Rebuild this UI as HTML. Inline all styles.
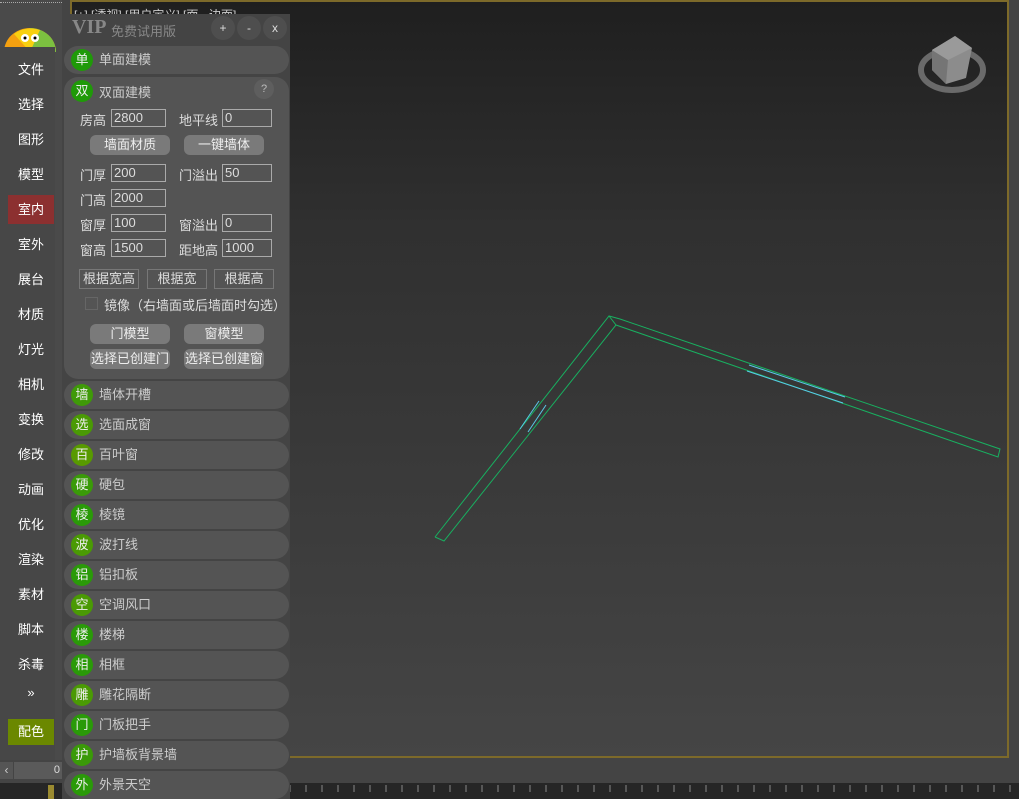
<!DOCTYPE html>
<html><head><meta charset="utf-8"><style>
*{margin:0;padding:0;box-sizing:border-box}
body{width:1019px;height:799px;overflow:hidden;background:#444;position:relative;font-family:"Liberation Sans","Noto Sans CJK SC",sans-serif;font-size:12px;color:#ddd}
.abs{position:absolute}
#vp{left:70px;top:0;width:939px;height:758px;border:2px solid #7d6a2a;background:linear-gradient(#1f1f1f 0%,#303030 30%,#3c3c3c 70%,#454545 100%)}
#side{left:0;top:0;width:62px;height:760px;background:#4a4a4a}
.mi{position:absolute;left:8px;width:46px;height:29px;line-height:29px;text-align:center;color:#fff;font-size:13px}
#panel{left:62px;top:14px;width:228px;height:785px;background:#444}
.pill{position:absolute;left:2px;width:225px;height:28px;border-radius:14px;background:#545454;color:#ccc;font-size:13px}
.pill .c{position:absolute;left:7px;top:3px;width:22px;height:22px;border-radius:11px;background:#2f9a08;color:#eee;text-align:center;line-height:22px;font-size:13px}
.pill .t{position:absolute;left:35px;top:0;line-height:28px}
.lb{position:absolute;color:#ddd;font-size:13px}
.in{position:absolute;width:55px;height:18px;border:1px solid #aaa;color:#ddd;font-size:13px;padding-left:2px;line-height:16px}
.bt{position:absolute;height:20px;border-radius:6px;background:#7a7a7a;color:#eee;text-align:center;line-height:20px;font-size:13px}
.ob{position:absolute;height:20px;border:1px solid #777;color:#ddd;text-align:center;line-height:18px;font-size:13px}
</style></head><body>
<div class="abs" style="left:0;top:0;width:62px;border-bottom:1px dotted #aaa;height:5px"></div>
<div id="vp" class="abs">
<div class="abs" style="left:2px;top:4px;color:#ccc;font-size:12px">[+] [透视] [用户定义] [面 - 边面]</div>
</div>
<svg class="abs" style="left:0;top:0" width="1019" height="799">
<g fill="none" stroke="#18b060" stroke-width="1">
<polyline points="435,537 609,316 620,319 1000,449 998,457 616,325 444,541 435,537"/>
<line x1="609" y1="316" x2="616" y2="325"/>
</g>
<g stroke="#5ac8e8" stroke-width="1"><line x1="539" y1="401" x2="520" y2="429"/><line x1="546" y1="405" x2="528" y2="432"/><line x1="749" y1="365" x2="845" y2="397"/><line x1="747" y1="371" x2="843" y2="403"/></g>
<ellipse cx="952" cy="70" rx="31" ry="20" fill="none" stroke="#6a6a6a" stroke-width="6"/>
<polygon points="932,50 955,36 972,48 966,78 946,84 932,70" fill="#8c8c8c"/>
<polygon points="932,50 948,60 946,84 932,70" fill="#757575"/>
<polygon points="932,50 955,36 972,48 948,60" fill="#9a9a9a"/>
<rect x="0" y="783" width="1019" height="16" fill="#262626"/>
<g stroke="#888">
<path d="M290 785v7M306 785v7M322 785v7M338 785v7M354 785v7M370 785v7M386 785v7M402 785v7M418 785v7M434 785v7M450 785v7M466 785v7M482 785v7M498 785v7M514 785v7M530 785v7M546 785v7M562 785v7M578 785v7M594 785v7M610 785v7M626 785v7M642 785v7M658 785v7M674 785v7M690 785v7M706 785v7M722 785v7M738 785v7M754 785v7M770 785v7M786 785v7M802 785v7M818 785v7M834 785v7M850 785v7M866 785v7M882 785v7M898 785v7M914 785v7M930 785v7M946 785v7M962 785v7M978 785v7M994 785v7M1010 785v7"/></g>
</svg>
<div id="side" class="abs">
<div class="abs" style="left:0;top:2px;width:62px;border-top:1px dotted #aaa"></div>
<svg class="abs" style="left:4px;top:28px" width="52" height="24"><path d="M0 24A26 24 0 0 1 52 24Z" fill="#f4a010"/><path d="M26 0A26 24 0 0 1 52 24L26 24Z" fill="#7cc040"/><path d="M10 6A26 24 0 0 1 36 2L26 24Z" fill="#f8d010"/><circle cx="21" cy="10" r="4" fill="#fff"/><circle cx="31" cy="10" r="4" fill="#fff"/><circle cx="21" cy="10" r="1.5" fill="#000"/><circle cx="31" cy="10" r="1.5" fill="#000"/></svg>
<div class="abs" style="left:0;top:47px;width:55px;height:713px;background:#474747"></div>
<div class="mi" style="top:55px">文件</div><div class="mi" style="top:90px">选择</div><div class="mi" style="top:125px">图形</div><div class="mi" style="top:160px">模型</div>
<div class="mi" style="top:195px;background:#8c3030">室内</div>
<div class="mi" style="top:230px">室外</div><div class="mi" style="top:265px">展台</div><div class="mi" style="top:300px">材质</div><div class="mi" style="top:335px">灯光</div><div class="mi" style="top:370px">相机</div><div class="mi" style="top:405px">变换</div><div class="mi" style="top:440px">修改</div><div class="mi" style="top:475px">动画</div><div class="mi" style="top:510px">优化</div><div class="mi" style="top:545px">渲染</div><div class="mi" style="top:580px">素材</div><div class="mi" style="top:615px">脚本</div><div class="mi" style="top:650px">杀毒</div><div class="mi" style="top:678px">»</div>
<div class="mi" style="top:719px;height:26px;line-height:26px;background:#6b8800">配色</div>
</div>
<div class="abs" style="left:0;top:762px;width:13px;height:17px;background:#555;color:#ccc;text-align:center;line-height:17px">‹</div>
<div class="abs" style="left:14px;top:762px;width:48px;height:17px;background:#5a5a5a;color:#ddd;text-align:right;padding-right:2px;line-height:17px;font-size:11px">0</div>
<div class="abs" style="left:48px;top:785px;width:6px;height:14px;background:#9a8a30"></div>
<div id="panel" class="abs">
<div class="abs" style="left:10px;top:2px;font-family:'Liberation Serif',serif;font-weight:bold;font-size:20px;color:#888">VIP</div>
<div class="abs" style="left:49px;top:7px;font-size:13px;color:#888">免费试用版</div>
<div class="abs" style="left:149px;top:2px;width:24px;height:24px;border-radius:12px;background:#4e4e4e;text-align:center;line-height:24px;color:#ddd">+</div>
<div class="abs" style="left:175px;top:2px;width:24px;height:24px;border-radius:12px;background:#4e4e4e;text-align:center;line-height:24px;color:#ddd">-</div>
<div class="abs" style="left:201px;top:2px;width:24px;height:24px;border-radius:12px;background:#4e4e4e;text-align:center;line-height:24px;color:#ddd">x</div>
<div class="pill" style="top:32px"><span class="c" style="background:#1f9a08">单</span><span class="t">单面建模</span></div>
<div class="abs" style="left:2px;top:63px;width:225px;height:302px;border-radius:14px;background:#545454">
<span class="abs" style="left:7px;top:3px;width:22px;height:22px;border-radius:11px;background:#1f9a08;color:#eee;text-align:center;line-height:22px;font-size:13px">双</span>
<span class="abs" style="left:35px;top:5px;color:#ccc;font-size:13px">双面建模</span>
<span class="abs" style="left:190px;top:2px;width:20px;height:20px;border-radius:10px;background:#5e5e5e;text-align:center;line-height:20px;color:#bbb;font-size:11px">?</span>
</div>
<div class="lb" style="left:18px;top:96px">房高</div><div class="in" style="left:49px;top:95px">2800</div>
<div class="lb" style="left:117px;top:96px">地平线</div><div class="in" style="left:160px;top:95px;width:50px">0</div>
<div class="bt" style="left:28px;top:121px;width:80px">墙面材质</div><div class="bt" style="left:122px;top:121px;width:80px">一键墙体</div>
<div class="lb" style="left:18px;top:151px">门厚</div><div class="in" style="left:49px;top:150px">200</div>
<div class="lb" style="left:117px;top:151px">门溢出</div><div class="in" style="left:160px;top:150px;width:50px">50</div>
<div class="lb" style="left:18px;top:176px">门高</div><div class="in" style="left:49px;top:175px">2000</div>
<div class="lb" style="left:18px;top:201px">窗厚</div><div class="in" style="left:49px;top:200px">100</div>
<div class="lb" style="left:117px;top:201px">窗溢出</div><div class="in" style="left:160px;top:200px;width:50px">0</div>
<div class="lb" style="left:18px;top:226px">窗高</div><div class="in" style="left:49px;top:225px">1500</div>
<div class="lb" style="left:117px;top:226px">距地高</div><div class="in" style="left:160px;top:225px;width:50px">1000</div>
<div class="ob" style="left:17px;top:255px;width:60px">根据宽高</div><div class="ob" style="left:85px;top:255px;width:60px">根据宽</div><div class="ob" style="left:152px;top:255px;width:60px">根据高</div>
<div class="abs" style="left:23px;top:283px;width:13px;height:13px;border:1px solid #666"></div>
<div class="lb" style="left:42px;top:281px">镜像（右墙面或后墙面时勾选）</div>
<div class="bt" style="left:28px;top:310px;width:80px">门模型</div><div class="bt" style="left:122px;top:310px;width:80px">窗模型</div>
<div class="bt" style="left:28px;top:335px;width:80px">选择已创建门</div><div class="bt" style="left:122px;top:335px;width:80px">选择已创建窗</div>
<div class="pill" style="top:367px"><span class="c" style="background:#3f9a08">墙</span><span class="t">墙体开槽</span></div>
<div class="pill" style="top:397px"><span class="c" style="background:#4a9a04">选</span><span class="t">选面成窗</span></div>
<div class="pill" style="top:427px"><span class="c" style="background:#589a00">百</span><span class="t">百叶窗</span></div>
<div class="pill" style="top:457px"><span class="c" style="background:#3a9a08">硬</span><span class="t">硬包</span></div>
<div class="pill" style="top:487px"><span class="c" style="background:#2a9a08">棱</span><span class="t">棱镜</span></div>
<div class="pill" style="top:517px"><span class="c" style="background:#4a9a04">波</span><span class="t">波打线</span></div>
<div class="pill" style="top:547px"><span class="c" style="background:#2a9a08">铝</span><span class="t">铝扣板</span></div>
<div class="pill" style="top:577px"><span class="c" style="background:#4a9a04">空</span><span class="t">空调风口</span></div>
<div class="pill" style="top:607px"><span class="c" style="background:#2a9a08">楼</span><span class="t">楼梯</span></div>
<div class="pill" style="top:637px"><span class="c" style="background:#2a9a08">相</span><span class="t">相框</span></div>
<div class="pill" style="top:667px"><span class="c" style="background:#4a9a04">雕</span><span class="t">雕花隔断</span></div>
<div class="pill" style="top:697px"><span class="c" style="background:#2a9a08">门</span><span class="t">门板把手</span></div>
<div class="pill" style="top:727px"><span class="c" style="background:#3a9a08">护</span><span class="t">护墙板背景墙</span></div>
<div class="pill" style="top:757px"><span class="c" style="background:#2a9a08">外</span><span class="t">外景天空</span></div>
</div>
</body></html>
